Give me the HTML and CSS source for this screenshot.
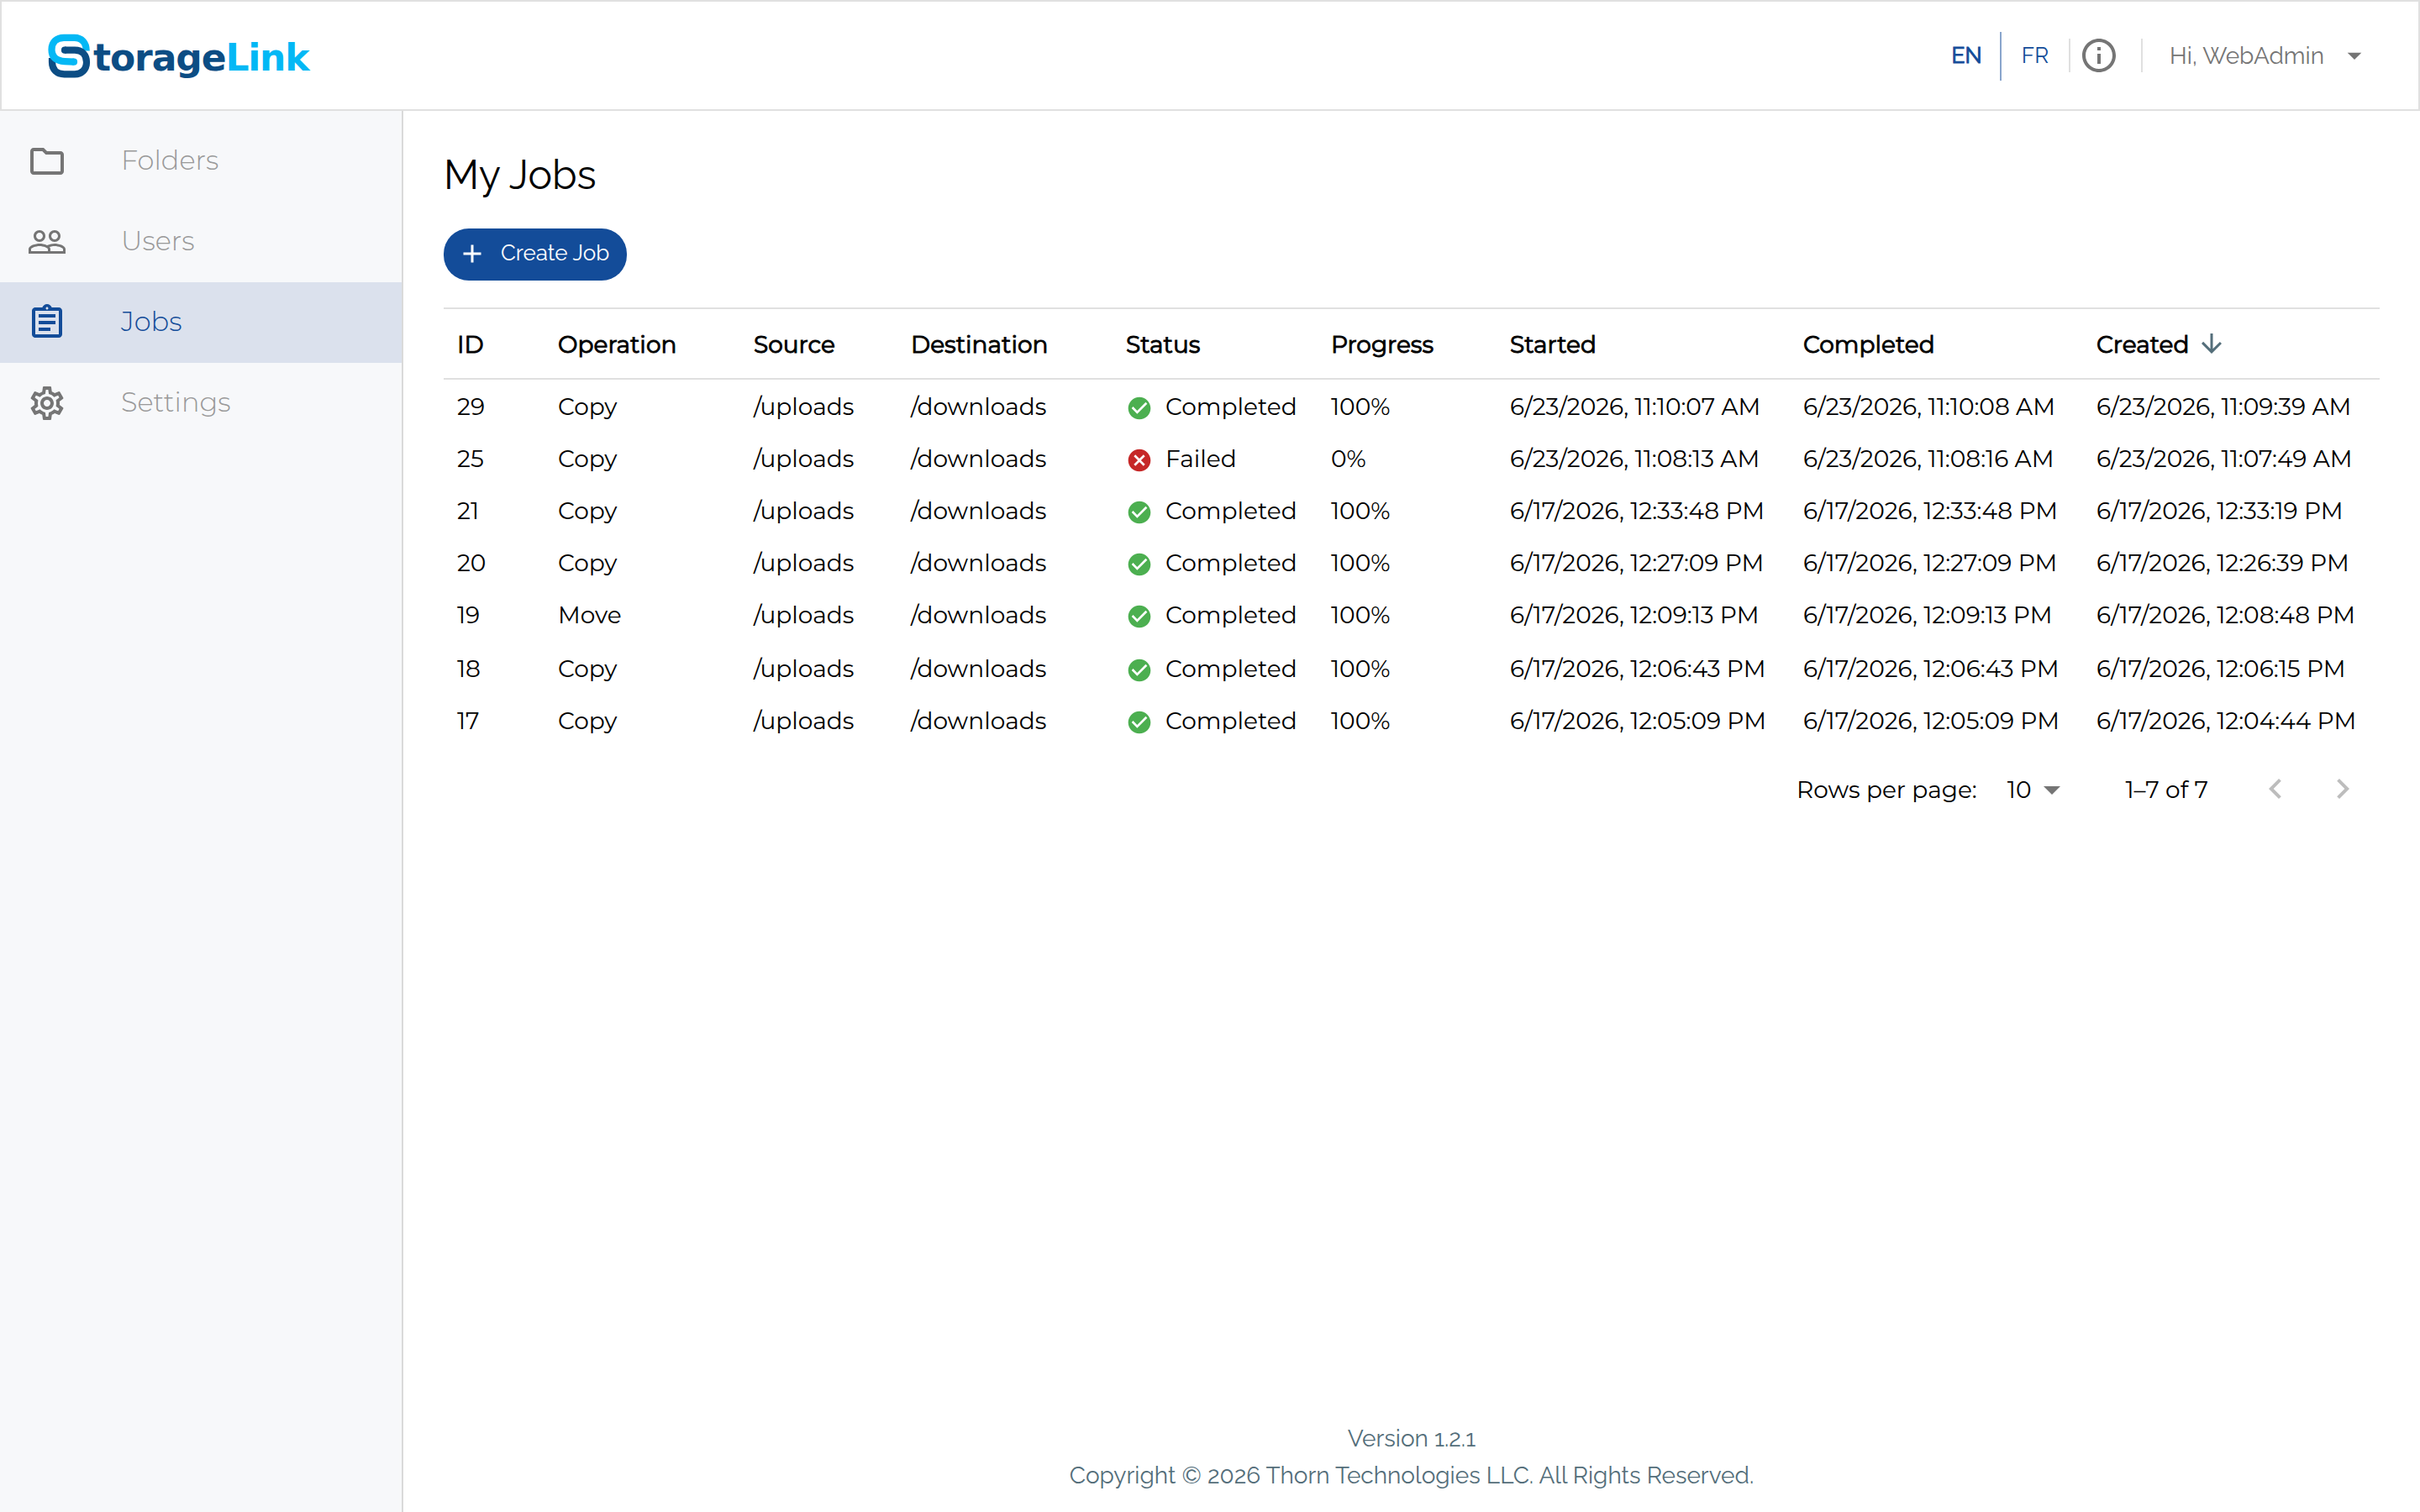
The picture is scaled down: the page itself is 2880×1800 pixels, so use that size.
FILE: index.html
```html
<!DOCTYPE html>
<html lang="en">
<head>
  <meta charset="UTF-8">
  <title>StorageLink</title>
  <meta name="viewport" content="width=device-width, initial-scale=1">
  <link rel="stylesheet" href="styles.css">
</head>
<body>

<!-- shared icons -->
<svg class="sprite" width="0" height="0">
  <symbol id="check" viewBox="0 0 24 24"><path d="M12 2C6.48 2 2 6.48 2 12s4.48 10 10 10 10-4.48 10-10S17.52 2 12 2zm-2 15l-5-5 1.41-1.41L10 14.17l7.59-7.59L19 8l-9 9z"/></symbol>
  <symbol id="cancel" viewBox="0 0 24 24"><path d="M12 2C6.47 2 2 6.47 2 12s4.47 10 10 10 10-4.47 10-10S17.53 2 12 2zm5 13.59L15.59 17 12 13.41 8.41 17 7 15.59 10.59 12 7 8.41 8.41 7 12 10.59 15.59 7 17 8.41 13.41 12 17 15.59z"/></symbol>
  <symbol id="caret" viewBox="0 0 24 24"><path d="M7 10l5 5 5-5z"/></symbol>
</svg>

<header class="header">
  <a class="logo">
    <svg class="logo-mark" viewBox="56 40 52 54">
      <path class="dark" d="M62 69v5c0 9 6 14.3 14.5 14.3H89"/>
      <path class="light" d="M88 73.7l-11-.6C67 72.500 61.500 68 61.500 59c0-9 6-14.200 14.500-14.200h12.500c8.500 0 14.200 6 14.200 15.700" />
      <path class="dark" d="M77 59.700h12c9 0 14 6 14 14.300 0 9-6 14.300-14 14.300"/>
      <circle class="dark-cap" cx="77" cy="59.700" r="4.100"/>
      <circle class="light-cap" cx="88" cy="73.700" r="4.100"/>
    </svg>
    <span class="logo-text">torage</span><span class="logo-text logo-link">Link</span>
  </a>
  <div class="header-right">
    <span class="lang active">EN</span>
    <span class="lang-divider"></span>
    <span class="lang">FR</span>
    <span class="divider"></span>
    <svg class="icon info" viewBox="0 0 24 24"><path d="M11 7h2v2h-2zm0 4h2v6h-2zm1-9C6.480 2 2 6.480 2 12s4.480 10 10 10 10-4.480 10-10S17.520 2 12 2zm0 18c-4.410 0-8-3.590-8-8s3.590-8 8-8 8 3.590 8 8-3.590 8-8 8z"/></svg>
    <span class="divider"></span>
    <span class="user">Hi, WebAdmin</span>
    <svg class="user-caret"><use href="#caret"/></svg>
  </div>
</header>

<div class="layout">
  <nav class="sidebar">
    <a class="nav-item">
      <svg class="icon" viewBox="0 0 24 24"><path d="M9.170 6l2 2H20v10H4V6h5.170M10 4H4c-1.100 0-1.990.9-1.990 2L2 18c0 1.100.9 2 2 2h16c1.100 0 2-.9 2-2V8c0-1.100-.9-2-2-2h-8l-2-2z"/></svg>
      <span>Folders</span>
    </a>
    <a class="nav-item">
      <svg class="icon" viewBox="0 0 24 24"><path d="M16.500 13c-1.200 0-3.070.340-4.500 1-1.430-.670-3.300-1-4.500-1C5.330 13 1 14.080 1 16.250V19h22v-2.750c0-2.170-4.330-3.250-6.500-3.250zm-4 4.500h-10v-1.250c0-.540 2.560-1.750 5-1.750s5 1.210 5 1.750v1.250zm9 0H14v-1.250c0-.460-.2-.860-.520-1.220.880-.300 1.960-.530 3.020-.530 2.440 0 5 1.210 5 1.750v1.250zM7.500 12c1.930 0 3.500-1.570 3.500-3.500S9.430 5 7.500 5 4 6.570 4 8.500 5.570 12 7.500 12zm0-5.500c1.100 0 2 .9 2 2s-.9 2-2 2-2-.9-2-2 .9-2 2-2zm9 5.500c1.930 0 3.500-1.570 3.500-3.500S18.430 5 16.500 5 13 6.570 13 8.500s1.570 3.500 3.500 3.500zm0-5.500c1.100 0 2 .9 2 2s-.9 2-2 2-2-.9-2-2 .9-2 2-2z"/></svg>
      <span>Users</span>
    </a>
    <a class="nav-item selected">
      <svg class="icon" viewBox="0 0 24 24"><path d="M7 15h7v2H7zm0-4h10v2H7zm0-4h10v2H7zm12-4h-4.180C14.400 1.840 13.300 1 12 1c-1.300 0-2.400.840-2.820 2H5c-.140 0-.270.010-.400.040-.390.080-.740.280-1.010.550-.180.180-.330.400-.430.640-.100.230-.160.490-.160.770v14c0 .270.060.540.160.780s.25.450.430.640c.270.270.620.470 1.010.550.130.020.260.030.400.030h14c1.100 0 2-.9 2-2V5c0-1.100-.9-2-2-2zm-7-.25c.410 0 .750.340.750.750s-.340.750-.750.750-.750-.340-.750-.750.340-.750.750-.750zM19 19H5V5h14v14z"/></svg>
      <span>Jobs</span>
    </a>
    <a class="nav-item">
      <svg class="icon" viewBox="0 0 24 24"><path d="M19.430 12.980c.040-.320.070-.640.070-.980 0-.340-.030-.660-.070-.980l2.110-1.650c.190-.150.240-.420.120-.640l-2-3.460c-.090-.160-.260-.250-.440-.250-.060 0-.120.010-.170.030l-2.490 1c-.520-.400-1.080-.730-1.690-.980l-.380-2.650C14.460 2.180 14.250 2 14 2h-4c-.250 0-.460.180-.490.420l-.380 2.650c-.610.250-1.170.590-1.690.980l-2.490-1c-.060-.020-.120-.030-.180-.030-.170 0-.340.090-.430.250l-2 3.460c-.130.220-.070.490.120.640l2.110 1.650c-.040.320-.070.650-.070.980 0 .330.030.660.070.980l-2.110 1.650c-.190.150-.240.420-.120.640l2 3.460c.090.160.260.250.440.250.060 0 .120-.010.170-.030l2.490-1c.520.400 1.080.730 1.690.980l.380 2.650c.030.240.240.420.490.420h4c.250 0 .460-.180.490-.420l.380-2.650c.610-.250 1.170-.590 1.690-.980l2.490 1c.060.020.120.030.180.030.170 0 .340-.090.430-.250l2-3.460c.120-.220.070-.490-.120-.640l-2.110-1.650zm-1.980-1.710c.040.310.050.520.050.730 0 .210-.020.430-.050.730l-.140 1.130.890.700 1.080.840-.700 1.210-1.270-.510-1.040-.420-.900.680c-.430.320-.840.560-1.250.730l-1.060.430-.160 1.130-.200 1.350h-1.400l-.190-1.350-.160-1.130-1.060-.430c-.430-.180-.830-.410-1.230-.710l-.910-.700-1.060.430-1.270.510-.700-1.210 1.080-.840.890-.700-.140-1.130c-.030-.310-.050-.540-.050-.740s.020-.430.050-.730l.140-1.130-.890-.700-1.080-.840.700-1.210 1.270.510 1.040.420.900-.680c.430-.320.840-.560 1.250-.730l1.060-.430.160-1.130.200-1.350h1.390l.190 1.350.160 1.130 1.060.430c.430.180.830.410 1.230.710l.910.700 1.060-.430 1.270-.510.700 1.210-1.070.850-.890.700.140 1.130zM12 8c-2.210 0-4 1.790-4 4s1.790 4 4 4 4-1.790 4-4-1.790-4-4-4zm0 6c-1.100 0-2-.9-2-2s.9-2 2-2 2 .9 2 2-.9 2-2 2z"/></svg>
      <span>Settings</span>
    </a>
  </nav>

  <main class="content">
    <h1>My Jobs</h1>
    <button class="create-button">
      <svg viewBox="0 0 24 24"><path d="M19 13h-6v6h-2v-6H5v-2h6V5h2v6h6v2z"/></svg>
      <span>Create Job</span>
    </button>

    <table class="jobs">
      <colgroup>
        <col class="c-id"><col class="c-op"><col class="c-src"><col class="c-dest"><col class="c-status"><col class="c-progress"><col class="c-date"><col class="c-date"><col>
      </colgroup>
      <thead>
        <tr>
          <th>ID</th><th>Operation</th><th>Source</th><th>Destination</th><th>Status</th><th>Progress</th><th>Started</th><th>Completed</th>
          <th><div class="sort">Created<svg viewBox="0 0 24 24"><path d="M20 12l-1.410-1.410L13 16.170V4h-2v12.170l-5.580-5.590L4 12l8 8 8-8z"/></svg></div></th>
        </tr>
      </thead>
      <tbody>
        <tr>
          <td>29</td><td>Copy</td><td>/uploads</td><td>/downloads</td>
          <td><div class="status ok"><svg><use href="#check"/></svg>Completed</div></td>
          <td>100%</td><td>6/23/2026, 11:10:07 AM</td><td>6/23/2026, 11:10:08 AM</td><td>6/23/2026, 11:09:39 AM</td>
        </tr>
        <tr>
          <td>25</td><td>Copy</td><td>/uploads</td><td>/downloads</td>
          <td><div class="status failed"><svg><use href="#cancel"/></svg>Failed</div></td>
          <td>0%</td><td>6/23/2026, 11:08:13 AM</td><td>6/23/2026, 11:08:16 AM</td><td>6/23/2026, 11:07:49 AM</td>
        </tr>
        <tr>
          <td>21</td><td>Copy</td><td>/uploads</td><td>/downloads</td>
          <td><div class="status ok"><svg><use href="#check"/></svg>Completed</div></td>
          <td>100%</td><td>6/17/2026, 12:33:48 PM</td><td>6/17/2026, 12:33:48 PM</td><td>6/17/2026, 12:33:19 PM</td>
        </tr>
        <tr>
          <td>20</td><td>Copy</td><td>/uploads</td><td>/downloads</td>
          <td><div class="status ok"><svg><use href="#check"/></svg>Completed</div></td>
          <td>100%</td><td>6/17/2026, 12:27:09 PM</td><td>6/17/2026, 12:27:09 PM</td><td>6/17/2026, 12:26:39 PM</td>
        </tr>
        <tr>
          <td>19</td><td>Move</td><td>/uploads</td><td>/downloads</td>
          <td><div class="status ok"><svg><use href="#check"/></svg>Completed</div></td>
          <td>100%</td><td>6/17/2026, 12:09:13 PM</td><td>6/17/2026, 12:09:13 PM</td><td>6/17/2026, 12:08:48 PM</td>
        </tr>
        <tr class="spaced">
          <td>18</td><td>Copy</td><td>/uploads</td><td>/downloads</td>
          <td><div class="status ok"><svg><use href="#check"/></svg>Completed</div></td>
          <td>100%</td><td>6/17/2026, 12:06:43 PM</td><td>6/17/2026, 12:06:43 PM</td><td>6/17/2026, 12:06:15 PM</td>
        </tr>
        <tr>
          <td>17</td><td>Copy</td><td>/uploads</td><td>/downloads</td>
          <td><div class="status ok"><svg><use href="#check"/></svg>Completed</div></td>
          <td>100%</td><td>6/17/2026, 12:05:09 PM</td><td>6/17/2026, 12:05:09 PM</td><td>6/17/2026, 12:04:44 PM</td>
        </tr>
      </tbody>
    </table>

    <div class="pagination">
      <span>Rows per page:</span>
      <span class="rows-value">10</span>
      <svg class="icon rows-caret"><use href="#caret"/></svg>
      <span class="range">1–7 of 7</span>
      <span class="page-button"><svg class="icon" viewBox="0 0 24 24"><path d="M15.410 7.410L14 6l-6 6 6 6 1.410-1.410L10.830 12z"/></svg></span>
      <span class="page-button"><svg class="icon" viewBox="0 0 24 24"><path d="M10 6L8.590 7.410 13.170 12l-4.580 4.590L10 18l6-6z"/></svg></span>
    </div>

    <footer>
      <div>Version 1.2.1</div>
      <div>Copyright © 2026 Thorn Technologies LLC. All Rights Reserved.</div>
    </footer>
  </main>
</div>

</body>
</html>
```
FILE: styles.css
```css
* {
  box-sizing: border-box;
}
body {
  margin: 0;
  height: 1800px;
  display: flex;
  flex-direction: column;
  overflow: hidden;
  background-color: #fff;
  color: #000;
  font-family: Montserrat, Inter, "Open Sans", sans-serif;
  font-size: 28px;
}
svg {
  fill: currentColor;
  flex-shrink: 0;
}
.sprite {
  position: absolute;
}
.icon {
  width: 48px;
  height: 48px;
}

/* header */
.header {
  height: 132px;
  flex-shrink: 0;
  display: flex;
  align-items: center;
  justify-content: space-between;
  padding: 0 56px 0 54px;
  border: 2px solid #e0e0e0;
}
.logo {
  display: flex;
  align-items: center;
}
.logo-mark {
  width: 52px;
  height: 54px;
  margin: 2px 3px 0 0;
  fill: none;
  stroke-width: 8.2;
}
.logo-mark .dark {
  stroke: #0c4d84;
}
.logo-mark .light {
  stroke: #03b8f5;
}
.logo-mark .dark-cap {
  fill: #0c4d84;
}
.logo-mark .light-cap {
  fill: #03b8f5;
}
.logo-text {
  margin-top: 4px;
  font-family: "DejaVu Sans", sans-serif;
  font-size: 44px;
  font-weight: bold;
  letter-spacing: -1.1px;
  color: #0c4d84;
}
.logo-link {
  letter-spacing: -1.2px;
  color: #03b8f5;
}
.header-right {
  display: flex;
  align-items: center;
  font-family: Raleway, Lato, sans-serif;
  color: #757575;
}
.lang {
  width: 80px;
  text-align: center;
  font-size: 26px;
  color: #134c99;
}
.lang.active {
  padding-left: 1px;
  -webkit-text-stroke: 1px #134c99;
}
.lang-divider {
  width: 2px;
  height: 58px;
  margin-top: 2px;
  background-color: #89a5cc;
}
.divider {
  width: 2px;
  height: 40px;
  background-color: #e0e0e0;
}
.info {
  margin: 0 26px 0 10px;
}
.user {
  width: 232px;
  padding-left: 32px;
}
.user-caret {
  width: 40px;
  height: 40px;
}

/* sidebar */
.layout {
  flex: 1;
  display: flex;
}
.sidebar {
  width: 480px;
  padding-top: 12px;
  background-color: #f7f8fa;
  border-right: 2px solid #dadada;
}
.nav-item {
  height: 96px;
  display: flex;
  align-items: center;
  gap: 64px;
  padding-left: 32px;
  font-size: 32px;
  font-weight: 350;
  color: #999;
}
.nav-item .icon {
  color: #757575;
}
.nav-item span {
  margin-top: -4px;
}
.nav-item.selected,
.nav-item.selected .icon {
  color: #134c99;
}
.nav-item.selected {
  background-color: #dbe1ed;
}

/* content */
.content {
  flex: 1;
  display: flex;
  flex-direction: column;
  padding: 44px 48px 21px;
}
h1 {
  margin: 0 0 32px;
  font-family: Raleway, Lato, sans-serif;
  font-size: 48px;
  font-weight: 400;
  line-height: 64px;
}
.create-button {
  align-self: flex-start;
  width: 218px;
  height: 62px;
  display: flex;
  align-items: center;
  gap: 16px;
  padding: 0 0 2px 16px;
  border: none;
  border-radius: 30px;
  background-color: #134c99;
  color: #fff;
  font-family: Raleway, Lato, sans-serif;
  font-size: 26px;
  white-space: nowrap;
}
.create-button svg {
  width: 36px;
  height: 36px;
}
.create-button span {
  margin-top: -2px;
}
.jobs {
  margin-top: 32px;
  width: 2304px;
  table-layout: fixed;
  border-collapse: separate;
  border-spacing: 0;
}
.c-id { width: 120px; }
.c-op { width: 233px; }
.c-src { width: 187px; }
.c-dest { width: 256px; }
.c-status { width: 244px; }
.c-progress { width: 213px; }
.c-date { width: 349px; }
.jobs th,
.jobs td {
  padding: 2px 0 0 16px;
  text-align: left;
  white-space: nowrap;
}
.jobs th {
  height: 86px;
  border-top: 2px solid #e0e0e0;
  border-bottom: 2px solid #e0e0e0;
  font-weight: 400;
  -webkit-text-stroke: 0.9px #000;
}
.jobs td {
  height: 62px;
}
.jobs .spaced td {
  height: 64px;
  padding-top: 4px;
}
.sort {
  display: flex;
  align-items: center;
}
.sort svg {
  width: 36px;
  height: 36px;
  margin: -2px 0 0 9px;
  color: #546e7a;
}
.status {
  display: flex;
  align-items: center;
}
.status svg {
  width: 32px;
  height: 32px;
  margin: 4px 15px 0 0;
}
.ok svg {
  color: #4caf50;
}
.failed svg {
  color: #c62828;
}

.pagination {
  height: 104px;
  display: flex;
  align-items: center;
  justify-content: flex-end;
  padding-right: 4px;
}
.rows-value {
  margin-left: 36px;
}
.rows-caret {
  margin-left: 1px;
  color: #757575;
}
.range {
  margin: 0 40px 0 63px;
}
.page-button {
  width: 80px;
  height: 80px;
  padding: 16px;
  margin-top: -2px;
  color: #bdbdbd;
}

footer {
  margin-top: auto;
  text-align: center;
  font-family: Raleway, Lato, sans-serif;
  line-height: 44px;
  color: #546e7a;
}
```
